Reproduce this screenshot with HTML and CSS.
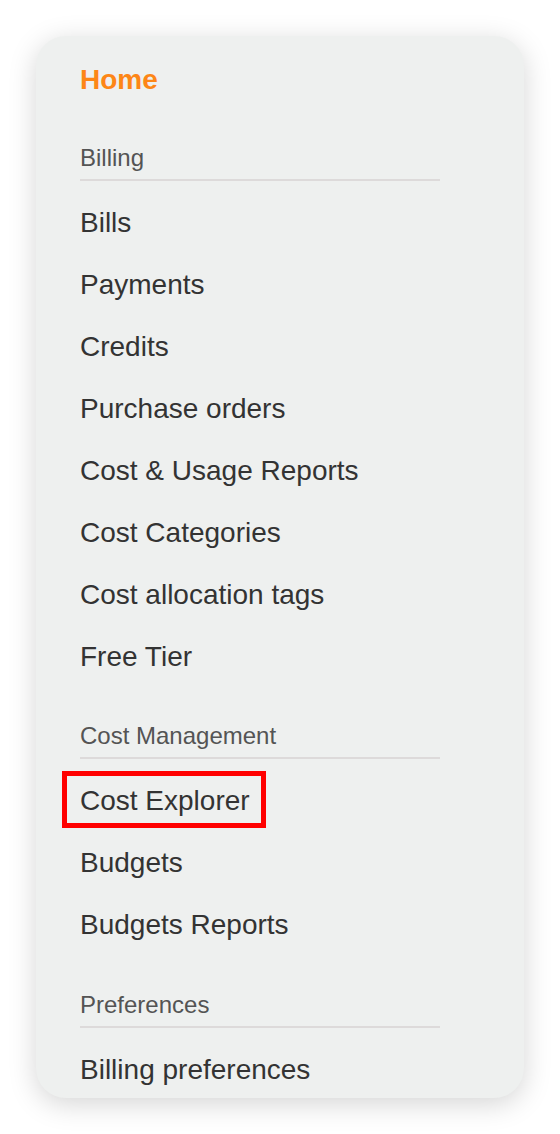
FILE: index.html
```html
<!DOCTYPE html>
<html lang="en">
<head>
<meta charset="utf-8">
<title>Billing navigation</title>
<link rel="stylesheet" href="styles.css">
</head>
<body>
<nav class="card">
  <div class="home">Home</div>

  <div class="section">Billing</div>
  <div class="item">Bills</div>
  <div class="item">Payments</div>
  <div class="item">Credits</div>
  <div class="item">Purchase orders</div>
  <div class="item">Cost &amp; Usage Reports</div>
  <div class="item">Cost Categories</div>
  <div class="item">Cost allocation tags</div>
  <div class="item">Free Tier</div>

  <div class="section">Cost Management</div>
  <div class="item"><span class="marked">Cost Explorer</span></div>
  <div class="item">Budgets</div>
  <div class="item">Budgets Reports</div>

  <div class="section section-last">Preferences</div>
  <div class="item">Billing preferences</div>
</nav>
</body>
</html>
```

FILE: styles.css
```css
html, body {
  margin: 0;
  padding: 0;
  background: #ffffff;
}

body {
  font-family: "Liberation Sans", Arial, Helvetica, sans-serif;
  padding: 36px;
}

.card {
  width: 488px;
  box-sizing: border-box;
  background: #eef0ef;
  border-radius: 30px;
  box-shadow: 0 6px 28px rgba(0, 0, 0, 0.17);
  padding: 27px 84px 0 44px;
}

.home {
  color: #fd8616;
  font-weight: bold;
  font-size: 28px;
  line-height: 34px;
  margin-bottom: 46px;
}

.section {
  color: #545454;
  font-size: 24px;
  line-height: 30px;
  padding-bottom: 6px;
  border-bottom: 2px solid #dddada;
  margin-bottom: 11px;
}

.item + .section {
  margin-top: 33px;
}

.item + .section-last {
  margin-top: 34px;
}

.item {
  color: #333333;
  font-size: 28px;
  line-height: 62px;
  height: 62px;
  white-space: nowrap;
}

.item:last-child {
  height: 59px;
}

.marked {
  position: relative;
}

.marked::after {
  content: "";
  position: absolute;
  left: -18px;
  right: -16px;
  top: -14px;
  bottom: -12px;
  border: 5px solid #ff0000;
}
```
